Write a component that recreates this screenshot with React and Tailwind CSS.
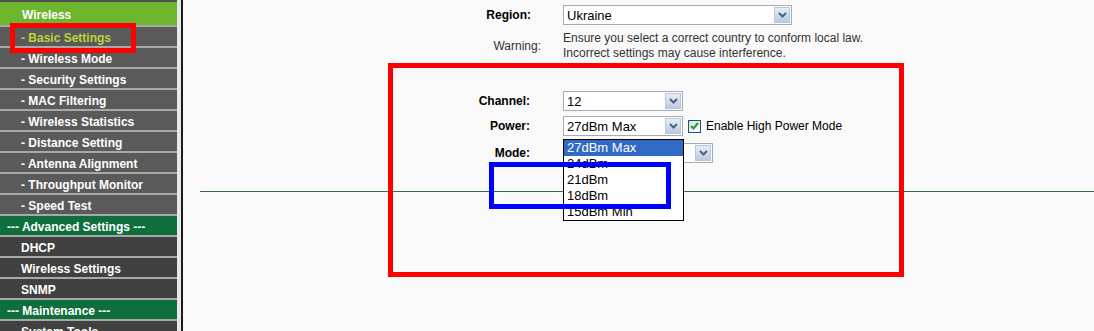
import React from "react";

const menu = [
  { label: "Wireless", kind: "top" },
  { label: "- Basic Settings", kind: "active" },
  { label: "- Wireless Mode", kind: "sub" },
  { label: "- Security Settings", kind: "sub" },
  { label: "- MAC Filtering", kind: "sub" },
  { label: "- Wireless Statistics", kind: "sub" },
  { label: "- Distance Setting", kind: "sub" },
  { label: "- Antenna Alignment", kind: "sub" },
  { label: "- Throughput Monitor", kind: "sub" },
  { label: "- Speed Test", kind: "sub" },
  { label: "--- Advanced Settings ---", kind: "section" },
  { label: "DHCP", kind: "item" },
  { label: "Wireless Settings", kind: "item" },
  { label: "SNMP", kind: "item" },
  { label: "--- Maintenance ---", kind: "section" },
  { label: "System Tools", kind: "item" },
];

const rowStyles = {
  top: "h-[25px] bg-[#6cb52d] pl-[22px] text-white",
  active: "h-[21px] bg-[#5a5a5a] pl-[21px] text-[#b6d63a]",
  sub: "h-[21px] bg-[#5a5a5a] pl-[21px] text-white",
  section: "h-[21px] bg-[#0f6f3c] pl-[7px] text-white",
  item: "h-[21px] bg-[#414141] pl-[21px] text-white",
};

const Chevron = () => (
  <svg width="9" height="6" viewBox="0 0 9 6">
    <path d="M1 1 L4.5 4.5 L8 1" fill="none" stroke="#4d6185" strokeWidth="2" />
  </svg>
);

const Select = ({ value, className }) => (
  <div
    className={`flex h-[20px] items-center border border-[#a5acb2] bg-white ${className}`}
  >
    <span className="flex-1 pl-[3px] text-[13px] leading-none text-black">
      {value}
    </span>
    <span className="mr-[1px] flex h-[16px] w-[16px] items-center justify-center border border-[#b8c6dc] bg-linear-to-b from-[#e6edf7] to-[#bccbe1]">
      <Chevron />
    </span>
  </div>
);

const powerOptions = ["27dBm Max", "24dBm", "21dBm", "18dBm", "15dBm Min"];

export default function App() {
  return (
    <div className="relative flex h-[331px] w-[1094px] overflow-hidden bg-[#f9f9f9] font-['Liberation_Sans',Arial,sans-serif] text-black">
      {/* Side menu */}
      <div className="flex w-[177px] flex-col">
        <div className="h-[2px] shrink-0 bg-[#505050]" />
        {menu.map((item) => (
          <div
            key={item.label}
            className={`flex shrink-0 items-center border-b-2 border-[#a8a8a8] pt-[2px] text-[12px] font-bold ${rowStyles[item.kind]}`}
          >
            {item.label}
          </div>
        ))}
      </div>
      <div className="w-[4px] bg-[#e8e8e8]" />
      <div className="w-[2px] bg-[#1c1c1c]" />

      {/* Main */}
      <div className="flex-1 pt-[5px]">
        <div className="flex h-[20px] items-center">
          <div className="w-[348px] text-right text-[12px] font-bold">Region:</div>
          <Select value="Ukraine" className="ml-[32px] w-[229px]" />
        </div>
        <div className="mt-[6px] flex items-center">
          <div className="w-[358px] text-right text-[12px] text-[#333]">Warning:</div>
          <div className="ml-[22px] text-[12px] leading-[15px] text-[#333]">
            Ensure you select a correct country to conform local law.
            <br />
            Incorrect settings may cause interference.
          </div>
        </div>

        <div className="mt-[30px] flex h-[20px] items-center">
          <div className="w-[347px] text-right text-[12px] font-bold">Channel:</div>
          <Select value="12" className="ml-[33px] w-[120px]" />
        </div>
        <div className="mt-[5px] flex h-[20px] items-center">
          <div className="w-[347px] text-right text-[12px] font-bold">Power:</div>
          <Select value="27dBm Max" className="ml-[33px] w-[120px]" />
          <span className="ml-[5px] flex h-[13px] w-[13px] items-center justify-center border border-[#1c5180] bg-linear-to-br from-[#dcdcd7] to-white">
            <svg width="9" height="8" viewBox="0 0 9 8">
              <path d="M1 4 L3.5 6.5 L8 1" fill="none" stroke="#21a121" strokeWidth="2" />
            </svg>
          </span>
          <span className="ml-[5px] text-[12px]">Enable High Power Mode</span>
        </div>
        <div className="mt-[7px] flex h-[20px] items-center">
          <div className="w-[347px] text-right text-[12px] font-bold">Mode:</div>
          <Select value="" className="ml-[33px] w-[150px]" />
        </div>

        <div className="ml-[17px] mt-[28px] h-px bg-[#2e7040]" />
      </div>

      {/* Open power dropdown */}
      <div className="absolute left-[563px] top-[139px] w-[121px] border border-black bg-white">
        {powerOptions.map((opt, i) => (
          <div
            key={opt}
            className={`h-[16px] pl-[3px] text-[13px] leading-[16px] ${i === 0 ? "bg-[#316ac5] text-white" : "text-black"}`}
          >
            {opt}
          </div>
        ))}
      </div>

      {/* Annotation boxes */}
      <div className="absolute left-[10px] top-[23px] h-[30px] w-[126px] border-[5px] border-[#ff0000]" />
      <div className="absolute left-[388px] top-[63px] h-[214px] w-[516px] border-[5px] border-[#ff0000]" />
      <div className="absolute left-[489px] top-[162px] h-[47px] w-[182px] border-[5px] border-[#0000ff]" />
    </div>
  );
}
